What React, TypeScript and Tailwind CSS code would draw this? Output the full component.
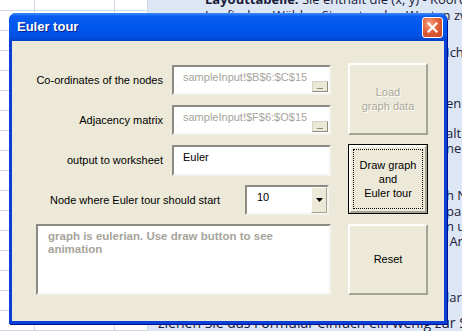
import React from 'react';

const sunken =
  'border-2 border-t-[#8c8a82] border-l-[#8c8a82] border-b-[#f4f3ee] border-r-[#f4f3ee] bg-white';
const raised =
  'border-2 border-t-[#fdfdfb] border-l-[#fdfdfb] border-b-[#a5a296] border-r-[#a5a296] bg-[#ece9d8]';

const rightLines: { y: string; text: string }[] = [
  { y: 'top-[45px]', text: 'Ich' },
  { y: 'top-[96px]', text: 'en' },
  { y: 'top-[126px]', text: 'alth' },
  { y: 'top-[141px]', text: 'ne' },
  { y: 'top-[188px]', text: 'h N' },
  { y: 'top-[204px]', text: 'pa' },
  { y: 'top-[219px]', text: 'n u' },
  { y: 'top-[234px]', text: ' An' },
  { y: 'top-[290px]', text: 'lar' },
];

const RefInput: React.FC<{ value: string }> = ({ value }) => (
  <div className={`relative h-[30px] w-[159px] ${sunken}`}>
    <span className="absolute left-[9px] top-[2px] text-[11px] text-[#a6a49a]">{value}</span>
    <div className="absolute right-[1px] bottom-[1px] h-[11px] w-[16px] border border-t-[#d6d3c6] border-l-[#d6d3c6] border-b-[#8c8a82] border-r-[#8c8a82] bg-[#ece9d8] flex items-end justify-center">
      <div className="mb-[2px] h-[1px] w-[6px] bg-[#8c8a82]" />
    </div>
  </div>
);

const SheetGrid: React.FC = () => (
  <div className="flex w-[148px] h-full bg-white">
    {[35, 80, 33].map((w, i) => (
      <div key={i} className="flex flex-col border-r border-[#d0d7e5]" style={{ width: w }}>
        <div className="h-[12px] border-b border-[#d0d7e5]" />
        {Array.from({ length: 16 }).map((_, r) => (
          <div key={r} className="h-[20px] shrink-0 border-b border-[#d0d7e5]" />
        ))}
      </div>
    ))}
  </div>
);

export default function App() {
  return (
    <div className="relative flex w-[462px] h-[331px] overflow-hidden font-['Liberation_Sans',Arial,sans-serif]">
      <SheetGrid />
      <div className="relative flex-1 bg-[#dde6f4] text-[#1b1b3a] font-['Open_Sans',sans-serif] text-[13px] leading-[15px]">
        <div className="absolute left-[57px] top-[-8px] whitespace-nowrap">
          <b>Layouttabelle:</b> Sie enthält die (x, y) - Koordinaten
        </div>
        <div className="absolute left-[57px] top-[8px] whitespace-nowrap">
          Laufinden. Wählen Sie unter den Werten zw
        </div>
        {rightLines.map((l) => (
          <div key={l.text} className={`absolute left-[298px] whitespace-pre ${l.y}`}>
            {l.text}
          </div>
        ))}
        <div className="absolute left-[10px] top-[314px] whitespace-nowrap text-[14px] leading-[17px]">
          ziehen Sie das Formular einfach ein wenig zur Seite
        </div>
      </div>

      {/* dialog window */}
      <div className="absolute left-[9px] top-[13px] w-[438px] h-[311px] flex flex-col rounded-t-[7px] bg-[#0a3fd8] shadow-[1px_1px_0_#00138c]">
        <div className="h-[28px] shrink-0 flex items-center justify-between pl-[8px] pr-[4px] rounded-t-[7px] bg-[linear-gradient(to_bottom,#3b8cfb_0%,#0b5df0_12%,#0058ee_45%,#0152e6_80%,#0243c8_100%)]">
          <span className="text-white font-bold text-[13px] font-['Liberation_Sans',sans-serif] [text-shadow:1px_1px_0_#0a1e8a]">
            Euler tour
          </span>
          <div className="w-[21px] h-[21px] rounded-[3px] border border-white flex items-center justify-center bg-[radial-gradient(circle_at_35%_30%,#f3a483_0%,#e2613a_45%,#c4441f_100%)]">
            <svg width="11" height="11" viewBox="0 0 11 11">
              <path d="M1.5 1.5 L9.5 9.5 M9.5 1.5 L1.5 9.5" stroke="white" strokeWidth="2.2" strokeLinecap="square" />
            </svg>
          </div>
        </div>
        <div className="flex-1 mx-[3px] mb-[3px] bg-[#ece9d8] flex pt-[24px] text-[11px] text-black">
          <div className="flex flex-col w-[320px] pl-[24px]">
            <div className="flex items-center gap-[9px]">
              <span className="w-[127px] text-right">Co-ordinates of the nodes</span>
              <RefInput value="sampleInput!$B$6:$C$15" />
            </div>
            <div className="flex items-center gap-[9px] mt-[10px]">
              <span className="w-[127px] text-right">Adjacency matrix</span>
              <RefInput value="sampleInput!$F$6:$O$15" />
            </div>
            <div className="flex items-center gap-[9px] mt-[10px]">
              <span className="w-[127px] text-right">output to worksheet</span>
              <div className={`h-[31px] w-[159px] pl-[9px] pt-[2px] ${sunken}`}>Euler</div>
            </div>
            <div className="flex items-center mt-[9px] pl-[14px]">
              <span className="w-[195px]">Node where Euler tour should start</span>
              <div className={`flex h-[30px] w-[84px] ${sunken}`}>
                <span className="flex-1 pl-[10px] pt-[2px]">10</span>
                <div className="w-[16px] h-full border border-t-[#fdfdfb] border-l-[#fdfdfb] border-b-[#a5a296] border-r-[#a5a296] bg-[#ece9d8] flex items-center justify-center">
                  <svg width="7" height="4" viewBox="0 0 7 4">
                    <path d="M0 0 H7 L3.5 4 Z" fill="black" />
                  </svg>
                </div>
              </div>
            </div>
            <div className={`mt-[9px] h-[71px] w-[295px] pl-[10px] pt-[4px] font-bold text-[11.5px] text-[#a6a49a] leading-[13px] ${sunken}`}>
              graph is eulerian. Use draw button to see<br />animation
            </div>
          </div>
          <div className="flex flex-col pl-[16px] w-[96px]">
            <div className={`-mt-[2px] h-[72px] w-[80px] flex items-center justify-center text-center leading-[14px] text-[#aca899] [text-shadow:1px_1px_0_#ffffff] ${raised}`}>
              Load<br />graph data
            </div>
            <div className="mt-[9px] h-[70px] w-[80px] border border-black">
              <div className={`h-full w-full flex items-center justify-center p-[2px] ${raised}`}>
                <div className="h-full w-full border border-dotted border-black flex items-center justify-center text-center leading-[14px]">
                  Draw graph<br />and<br />Euler tour
                </div>
              </div>
            </div>
            <div className={`mt-[10px] h-[71px] w-[80px] flex items-center justify-center ${raised}`}>Reset</div>
          </div>
        </div>
      </div>
    </div>
  );
}
